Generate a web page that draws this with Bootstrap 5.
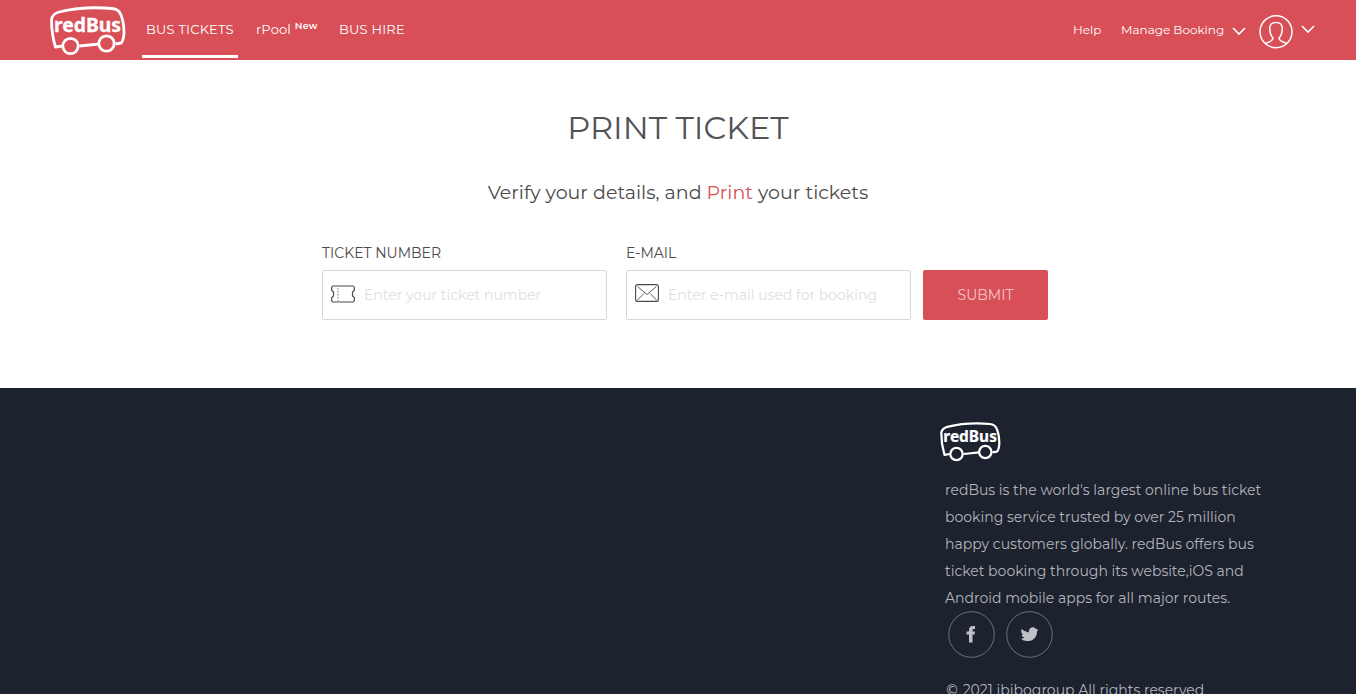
<!DOCTYPE html>
<html lang="en">
<head>
<meta charset="utf-8">
<meta name="viewport" content="width=device-width, initial-scale=1">
<title>Print Ticket - redBus</title>
<link href="https://cdn.jsdelivr.net/npm/bootstrap@5.3.0/dist/css/bootstrap.min.css" rel="stylesheet">
<style>
html,body{height:694px;overflow:hidden}
body{font-family:Montserrat,Inter,"Open Sans",sans-serif;color:#4a4a4a;background:#fff;font-size:14px}
.page{width:1356px;height:694px;overflow:hidden}
.topbar{height:60px;background:#d84f57;padding:0 40px 0 50px}
.topbar a{color:#fff;font-weight:400;text-decoration:none;white-space:nowrap}
.main-link{height:58px;line-height:59px;font-size:13px;padding:0 4px;border-bottom:3px solid transparent;letter-spacing:.22px}
.main-link.active{border-color:#fff}
.new{font-size:9.5px;font-weight:600;top:-5px;line-height:0}
.side-link{font-size:12px;line-height:60px}
h1{font-size:32px;line-height:40px;font-weight:400;margin:48px 0 0;color:#525358}
.lede{font-size:19px;line-height:28px;margin-top:31px;font-weight:400;letter-spacing:.02px}
.lede span{color:#d84f57}
.ticket-form{margin:36px 0 0 322px}
.ticket-form label{display:block;font-size:14px;line-height:20px;height:27px;font-weight:400;white-space:nowrap}
.field{width:285px;height:50px;border:1px solid #d8d8d8;border-radius:2px;padding:0 8px}
.field input{background:none;font-size:14px;font-weight:400;padding:0 0 1px 9px;height:48px;border:0;box-shadow:none!important}
.field input::placeholder{color:#e0e0e2;opacity:1}
.submit{width:125px;height:50px;background:#d84f57!important;color:#f5c5c8!important;border:0;border-radius:2px;font-size:14px;font-weight:400;margin-left:12px;padding:1px 0 0}
footer{height:306px;margin-top:68px;background:#1d222f;color:#b4b6ba}
.about{width:345px;margin-left:940px;padding-top:34px;font-weight:400}
.about p{margin:0 0 0 5px;line-height:27px;font-size:14px}
.about p span{display:block;width:max-content}
.copy-sign{font-family:"DejaVu Sans",sans-serif;font-style:normal;line-height:0}
svg{display:block;flex:none}
</style>
</head>
<body>
<svg width="0" height="0" class="position-absolute">
<symbol id="bus" viewBox="0 0 76 50"><g fill="none" stroke="#fff" stroke-width="2.8" stroke-linejoin="round"><path d="M12.500 40 5.500 41Q1.500 28 1.500 14Q2 8 9 6Q34 0 62 2.500Q69 3 71 9Q74 16 74 28Q73 36 71 37L65.500 38M29.500 40 49 38"/><circle cx="20.500" cy="40" r="7.700"/><circle cx="56.500" cy="37.500" r="7.700"/></g><text x="4" y="25.500" textLength="67" lengthAdjust="spacingAndGlyphs" font-family="Noto Sans" font-weight="700" font-size="19.500" fill="#fff" stroke="#fff" stroke-width=".3">redBus</text></symbol>
</svg>
<div class="page">
<nav class="topbar d-flex align-items-start">
  <a href="#"><svg width="76" height="50" style="margin-top:5.5px"><use href="#bus"/></svg></a>
  <a class="main-link active" href="#" style="margin-left:16px;width:96px">BUS TICKETS</a>
  <a class="main-link" href="#" style="margin-left:14px;width:69px">rPool <sup class="new">New</sup></a>
  <a class="main-link" href="#" style="margin-left:14px">BUS HIRE</a>
  <div class="ms-auto d-flex align-items-start">
    <a class="side-link" href="#" style="width:48px"><span>Help</span></a>
    <a class="side-link d-flex" href="#" style="width:138px"><span style="width:111px">Manage Booking</span><svg width="14" height="9" style="margin-top:27px" fill="none" stroke="#fff" stroke-width="1.6"><path d="m1 1 6 6 6-6"/></svg></a>
    <svg width="34" height="34" style="margin-top:15px" fill="none" stroke="#fff" stroke-width="1.5"><circle cx="17" cy="16.700" r="16"/><path d="M6 28.500Q14 26 14 23C12 21 10.800 18 10.800 13.500Q10.500 7.500 17 7.500T23.200 13.500C23.200 18 22 21 20 23Q20 26 28 28.500"/></svg>
    <svg class="ms-2" width="15" height="9" style="margin-top:25px" fill="none" stroke="#fff" stroke-width="1.6"><path d="m1 1 6 6 6-6"/></svg>
  </div>
</nav>
<main class="text-center">
  <h1><span>PRINT TICKET</span></h1>
  <div class="lede">Verify your details, and <span>Print</span> your tickets</div>
  <form class="ticket-form d-flex align-items-end text-start">
    <div><label for="tin"><span>TICKET NUMBER</span></label>
      <div class="field d-flex align-items-center"><svg width="24" height="18" style="margin-top:-3px" fill="none" stroke="#4a4a4a" stroke-width="1.200"><path d="M2 1H22Q23.300 1 23.300 3V5.500L21.500 7V11L23.300 12.500V15Q23.300 17 22 17H2Q.7 17 .7 15V12.500L2.500 11V7L.7 5.500V3Q.7 1 2 1Z"/><path d="M7 3v13" stroke-width="1" stroke="#777" stroke-dasharray="1.500 1.500"/></svg><input id="tin" class="form-control" placeholder="Enter your ticket number"></div></div>
    <div style="margin-left:19px"><label for="mail"><span>E-MAIL</span></label>
      <div class="field d-flex align-items-center"><svg width="24" height="18" style="margin-top:-4px" fill="none" stroke="#4a4a4a" stroke-width="1.100"><rect x=".6" y=".6" width="22.800" height="16.800" rx="2"/><path d="m2.500 2.500 9.500 8 9.500-8M2.500 16 9 9.500M21.500 16 15 9.500" stroke-width=".9"/></svg><input id="mail" class="form-control" placeholder="Enter e-mail used for booking"></div></div>
    <button type="button" class="btn submit">SUBMIT</button>
  </form>
</main>
<footer>
  <div class="about">
    <svg width="61" height="40"><use href="#bus"/></svg>
    <p style="padding-top:15px"><span>redBus is the world's largest online bus ticket</span><span>booking service trusted by over 25 million</span><span>happy customers globally. redBus offers bus</span><span>ticket booking through its website,iOS and</span><span>Android mobile apps for all major routes.</span></p>
    <div class="d-flex" style="margin:-1px 0 0 8px;gap:11px">
      <svg width="47" height="47"><circle cx="23.500" cy="23.500" r="22.800" fill="none" stroke="#6d717a"/><path fill="#bfc0c5" d="M21 31.500V23.500H18.500V20.500H21V19Q21 15 25 15H27V18H25.500Q24.500 18 24.500 19.300V20.500H27L26.600 23.500H24.500V31.500Z"/></svg>
      <svg width="47" height="47"><circle cx="23.500" cy="23.500" r="22.800" fill="none" stroke="#6d717a"/><path fill="#bfc0c5" d="M15.500 18Q19 21 23 21.500C22 17 27 14.500 29.500 17.500L32 18.800 31 20.500C31 27 26 30.500 21 30Q17.500 30 14.500 27.500Q17 28 18.500 26.500Q16 26 15.500 24L17 23.500Q14.500 21.500 15.500 18Z"/></svg>
    </div>
    <p style="padding-top:19px"><span><i class="copy-sign">©</i> 2021 ibibogroup All rights reserved</span></p>
  </div>
</footer>
</div>
<script src="https://cdn.jsdelivr.net/npm/bootstrap@5.3.0/dist/js/bootstrap.bundle.min.js"></script>
</body>
</html>
